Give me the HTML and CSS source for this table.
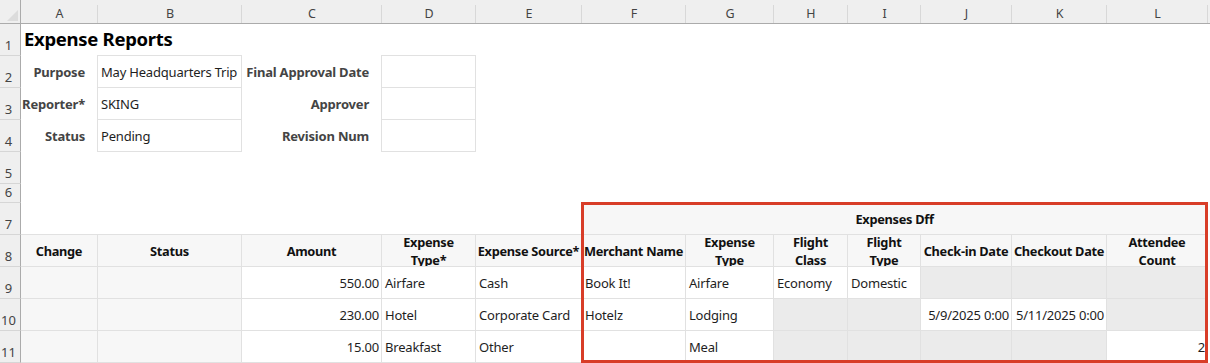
FILE: index.html
```html
<!DOCTYPE html>
<html lang="en">
<head>
<meta charset="utf-8">
<title>Expense Reports</title>
<link rel="stylesheet" href="styles.css">
</head>
<body>
<div class="sheet">
  <div class="grid">
    <!-- column headers -->
    <div class="corner"><svg width="11" height="11" viewBox="0 0 11 11"><path d="M11 0 L11 11 L0 11 Z" fill="#dcdcdc"/></svg></div>
    <div class="ch">A</div><div class="ch">B</div><div class="ch">C</div><div class="ch">D</div>
    <div class="ch">E</div><div class="ch">F</div><div class="ch">G</div><div class="ch">H</div>
    <div class="ch">I</div><div class="ch">J</div><div class="ch">K</div><div class="ch">L</div>
    <div class="ch ch-end"></div>

    <!-- row 1 -->
    <div class="rh">1</div>
    <div class="title span-all">Expense Reports</div>

    <!-- row 2 -->
    <div class="rh">2</div>
    <div class="lbl">Purpose</div>
    <div class="c box">May Headquarters Trip</div>
    <div class="lbl">Final Approval Date</div>
    <div class="c box"></div>
    <div class="blank span-rest"></div>

    <!-- row 3 -->
    <div class="rh">3</div>
    <div class="lbl">Reporter*</div>
    <div class="c box">SKING</div>
    <div class="lbl">Approver</div>
    <div class="c box"></div>
    <div class="blank span-rest"></div>

    <!-- row 4 -->
    <div class="rh">4</div>
    <div class="lbl">Status</div>
    <div class="c box">Pending</div>
    <div class="lbl">Revision Num</div>
    <div class="c box"></div>
    <div class="blank span-rest"></div>

    <!-- row 5 -->
    <div class="rh">5</div>
    <div class="blank span-all"></div>

    <!-- row 6 -->
    <div class="rh">6</div>
    <div class="blank span-all"></div>

    <!-- row 7 -->
    <div class="rh">7</div>
    <div class="blank span-ae under"></div>
    <div class="c hd span-fl">Expenses Dff</div>
    <div class="blank"></div>

    <!-- row 8 -->
    <div class="rh">8</div>
    <div class="c hd">Change</div>
    <div class="c hd">Status</div>
    <div class="c hd">Amount</div>
    <div class="c hd">Expense<br>Type*</div>
    <div class="c hd">Expense Source*</div>
    <div class="c hd">Merchant Name</div>
    <div class="c hd">Expense<br>Type</div>
    <div class="c hd">Flight<br>Class</div>
    <div class="c hd">Flight<br>Type</div>
    <div class="c hd">Check-in Date</div>
    <div class="c hd">Checkout Date</div>
    <div class="c hd">Attendee<br>Count</div>
    <div class="blank"></div>

    <!-- row 9 -->
    <div class="rh">9</div>
    <div class="c lt"></div>
    <div class="c lt"></div>
    <div class="c r">550.00</div>
    <div class="c">Airfare</div>
    <div class="c">Cash</div>
    <div class="c">Book It!</div>
    <div class="c">Airfare</div>
    <div class="c">Economy</div>
    <div class="c">Domestic</div>
    <div class="c ro"></div>
    <div class="c ro"></div>
    <div class="c ro"></div>
    <div class="blank"></div>

    <!-- row 10 -->
    <div class="rh">10</div>
    <div class="c lt"></div>
    <div class="c lt"></div>
    <div class="c r">230.00</div>
    <div class="c">Hotel</div>
    <div class="c">Corporate Card</div>
    <div class="c">Hotelz</div>
    <div class="c">Lodging</div>
    <div class="c ro"></div>
    <div class="c ro"></div>
    <div class="c r">5/9/2025 0:00</div>
    <div class="c r">5/11/2025 0:00</div>
    <div class="c ro"></div>
    <div class="blank"></div>

    <!-- row 11 -->
    <div class="rh">11</div>
    <div class="c lt"></div>
    <div class="c lt"></div>
    <div class="c r">15.00</div>
    <div class="c">Breakfast</div>
    <div class="c">Other</div>
    <div class="c"></div>
    <div class="c">Meal</div>
    <div class="c ro"></div>
    <div class="c ro"></div>
    <div class="c ro"></div>
    <div class="c ro"></div>
    <div class="c r">2</div>
    <div class="blank"></div>
  </div>
  <div class="selection"></div>
</div>
</body>
</html>
```

FILE: styles.css
```css
* {
  box-sizing: border-box;
  margin: 0;
  padding: 0;
}

html, body {
  background: #ffffff;
}

body {
  margin: 0;
  font-family: "Noto Sans", "Open Sans", sans-serif;
  overflow: hidden;
}

.sheet {
  position: relative;
  width: 1210px;
  height: 363px;
  overflow: hidden;
}

.grid {
  display: grid;
  grid-template-columns: 21px 77px 144px 140px 94px 106px 104px 88px 74px 73px 91px 95px 101px 2px;
  grid-template-rows: 24px repeat(5, 32px) 19px repeat(5, 32px);
}

/* headers of the sheet */
.corner {
  background: #efefef;
  border-right: 1px solid #ababab;
  border-bottom: 1px solid #ababab;
  display: flex;
  align-items: flex-end;
  justify-content: flex-end;
  padding: 0 2px 2px 0;
}

.corner svg {
  display: block;
}

.ch {
  background: #efefef linear-gradient(#d8d8d8, #d8d8d8) no-repeat right 0 bottom 0 / 1px 18px;
  border-bottom: 1px solid #ababab;
  color: #444444;
  font-size: 12.5px;
  display: flex;
  align-items: center;
  justify-content: center;
  padding-top: 3px;
}

.ch-end {
  background: #efefef;
}

.rh {
  background: #efefef;
  border-right: 1px solid #ababab;
  border-bottom: 1px solid #d6d6d6;
  color: #444444;
  font-size: 13px;
  line-height: 1;
  display: flex;
  align-items: flex-end;
  justify-content: center;
  padding: 0 3px 3px 0;
}

/* spans */
.span-all { grid-column: span 13; }
.span-rest { grid-column: span 9; }
.span-ae { grid-column: span 5; }
.span-fl { grid-column: span 7; }

.blank {
  background: transparent;
}

.under {
  border-bottom: 1px solid #e1e1e1;
}

.title {
  display: flex;
  align-items: center;
  padding: 0 0 4px 3px;
  font-size: 18.5px;
  font-weight: 700;
  letter-spacing: -0.3px;
  color: #000000;
  white-space: nowrap;
}

.lbl {
  display: flex;
  align-items: center;
  justify-content: flex-end;
  padding-right: 13px;
  font-size: 13px;
  font-weight: 700;
  letter-spacing: -0.2px;
  color: #444444;
  white-space: nowrap;
}

/* cells */
.c {
  display: flex;
  align-items: center;
  padding: 0 3px;
  font-size: 13px;
  letter-spacing: -0.2px;
  color: #1e1e1e;
  white-space: nowrap;
  overflow: hidden;
  border-right: 1px solid #e1e1e1;
  border-bottom: 1px solid #e1e1e1;
  background: #ffffff;
}

.box {
  box-shadow: -1px -1px 0 0 #e1e1e1, 0 -1px 0 0 #e1e1e1, -1px 0 0 0 #e1e1e1;
}

.r {
  justify-content: flex-end;
  padding-right: 2px;
}

.hd {
  background: #f7f7f7;
  padding: 0 1px;
  font-size: 12.8px;
  font-weight: 700;
  letter-spacing: -0.3px;
  color: #111111;
  justify-content: center;
  text-align: center;
  line-height: 18px;
}

.lt {
  background: #f7f7f7;
}

.ro {
  background: #ebebeb;
}

/* annotation rectangle drawn over the Expenses Dff block */
.selection {
  position: absolute;
  left: 581px;
  top: 202px;
  width: 627px;
  height: 161px;
  border: 3px solid #d83d28;
  pointer-events: none;
}
```
